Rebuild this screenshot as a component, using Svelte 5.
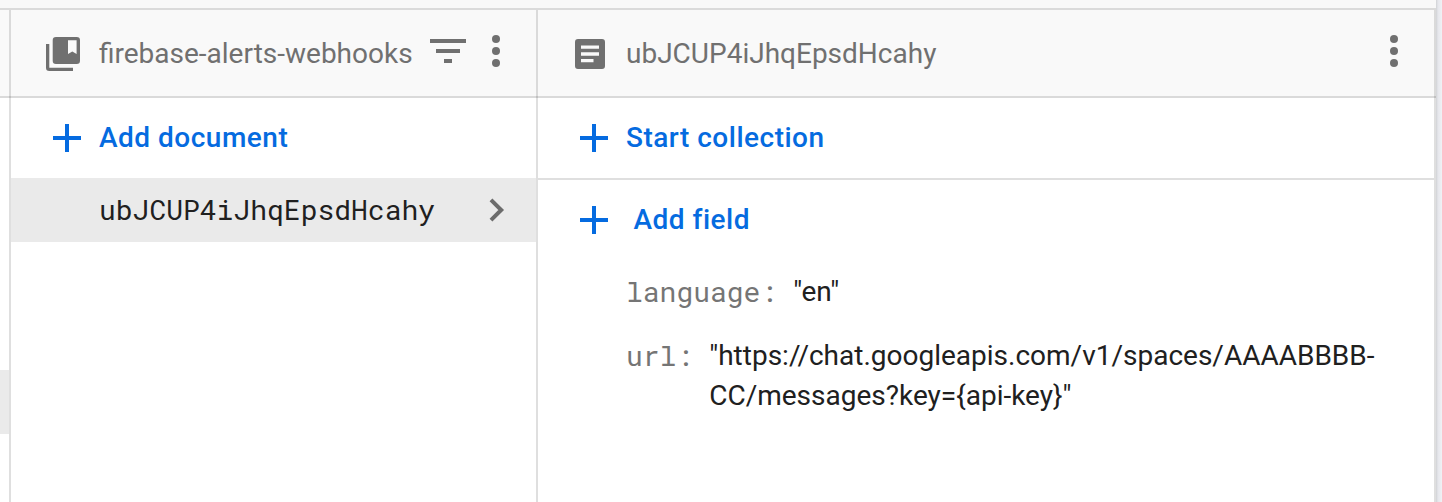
<script>
  const collection = 'firebase-alerts-webhooks';
  const documentId = 'ubJCUP4iJhqEpsdHcahy';
  const fields = [
    { name: 'language', value: '"en"' },
    { name: 'url', value: '"https://chat.googleapis.com/v1/spaces/AAAABBBB-CC/messages?key={api-key}"' }
  ];
</script>

{#snippet plus()}
  <svg class="plus" width="28" height="28" viewBox="0 0 28 28" shape-rendering="crispEdges"><path d="M12 0h4v12h12v4H16v12h-4V16H0v-4h12z" /></svg>
{/snippet}

{#snippet more()}
  <svg class="more" width="8" height="32" viewBox="0 0 8 32"><circle cx="4" cy="4" r="4" /><circle cx="4" cy="16" r="4" /><circle cx="4" cy="28" r="4" /></svg>
{/snippet}

<div class="page">
  <div class="main">
    <div class="top"></div>
    <div class="columns">
      <section class="parent">
        <div class="head"></div>
        <div class="peek"></div>
      </section>
      <section class="list">
        <header class="head">
          <svg class="book" width="34" height="34" viewBox="0 0 34 34">
            <path d="M0 7h3.3v23.7H27V34H3.3A3.3 3.3 0 0 1 0 30.7z" />
            <path fill-rule="evenodd" d="M10 0h20.7A3.3 3.3 0 0 1 34 3.3v20.4a3.3 3.3 0 0 1-3.3 3.3H10a3.3 3.3 0 0 1-3.3-3.3V3.3A3.3 3.3 0 0 1 10 0zM22 3.3V17l4.3-2.5 4.3 2.5V3.3z" />
          </svg>
          <span class="title">{collection}</span>
          <svg class="filter" width="36" height="24" viewBox="0 0 36 24" shape-rendering="crispEdges"><path d="M0 0h36v4H0zM6 10h24v4H6zM14 20h8v4h-8z" /></svg>
          {@render more()}
        </header>
        <div class="action">{@render plus()}<span>Add document</span></div>
        <div class="selected">
          <span class="mono">{documentId}</span>
          <svg class="chevron" width="16" height="24" viewBox="0 0 16 24"><path d="M2 1.8 12.2 12 2 22.2" fill="none" stroke="#6c6c6c" stroke-width="4" /></svg>
        </div>
      </section>
      <section class="detail">
        <header class="head">
          <svg class="doc" width="30" height="30" viewBox="0 0 30 30"><path fill-rule="evenodd" d="M3 0h24a3 3 0 0 1 3 3v24a3 3 0 0 1-3 3H3a3 3 0 0 1-3-3V3a3 3 0 0 1 3-3zM6 6.5v3.3h18V6.5zM6 13.2v3.5h18v-3.5zM6 20v3.3h12.5V20z" /></svg>
          <span class="title">{documentId}</span>
          {@render more()}
        </header>
        <div class="action start">{@render plus()}<span>Start collection</span></div>
        <div class="action field">{@render plus()}<span>Add field</span></div>
        <dl>
          {#each fields as f}
            <div class="pair"><dt class="mono">{f.name}:</dt><dd>{f.value}</dd></div>
          {/each}
        </dl>
      </section>
    </div>
  </div>
  <div class="edge"></div>
</div>

<style>
  :global(body) { margin: 0; overflow: hidden; }
  .page, .page * { box-sizing: border-box; }
  .page { width: 1442px; height: 502px; display: flex; overflow: hidden; background: #fff; font-family: Roboto, sans-serif; font-size: 28px; color: #202020; }
  .main { width: 1436px; display: flex; flex-direction: column; }
  .top { height: 10px; flex: none; background: #f8f8f8; border-bottom: 2px solid #dadada; }
  .columns { flex: 1; display: grid; grid-template-columns: 11px 527px 898px; }
  section { border-right: 2px solid #dfdfdf; min-width: 0; }
  .head { height: 88px; display: flex; align-items: center; background: linear-gradient(#bfbfbf, #bfbfbf) right bottom / 2px 2px no-repeat border-box, linear-gradient(#dadada, #dadada) right top / 2px 100% no-repeat, linear-gradient(#dadada, #dadada) left bottom / 100% 2px no-repeat, #f9f9f9; padding: 0 2px 2px 0; color: #707070; margin-right: -2px; }
  .peek { height: 64px; margin-top: 272px; background: #eaeaea; }
  svg { fill: #707070; flex: none; display: block; }
  .book { margin-left: 35px; margin-right: 19px; margin-top: 2px; }
  .title { line-height: 40px; white-space: nowrap; margin-top: 2px; }
  .list .title { width: 313px; }
  .filter { margin-left: 18px; margin-top: -5px; }
  .more { margin-top: -4px; }
  .list .more { margin-left: 26px; }
  .doc { margin-left: 37px; margin-right: 21px; margin-top: 2px; }
  .detail .more { margin-left: auto; margin-right: 36px; }
  .action { height: 80px; display: flex; align-items: center; padding-left: 42px; gap: 18px; color: #056be0; font-weight: 500; letter-spacing: .5px; white-space: nowrap; }
  .action span, .selected span { margin-bottom: 2px; }
  .action .plus { fill: #056be0; }
  .start { height: 82px; border-bottom: 2px solid #dfdfdf; }
  .field { gap: 25.5px; }
  .selected { height: 64px; display: flex; align-items: center; padding-left: 88px; background: #eaeaea; }
  .mono { font-family: "Roboto Mono", "Liberation Mono", monospace; font-size: 28px; }
  .chevron { margin-left: 54px; }
  dl { margin: 12px 0 0 88px; }
  .pair { display: flex; line-height: 40px; margin-bottom: 24px; }
  dt { color: #757575; margin-right: 16px; }
  dd { margin: 0; width: 670px; overflow-wrap: break-word; }
  .edge { width: 6px; background: linear-gradient(to right, #d0d2d5, #e6e7ec 34%, #f0f1f5); }
</style>
